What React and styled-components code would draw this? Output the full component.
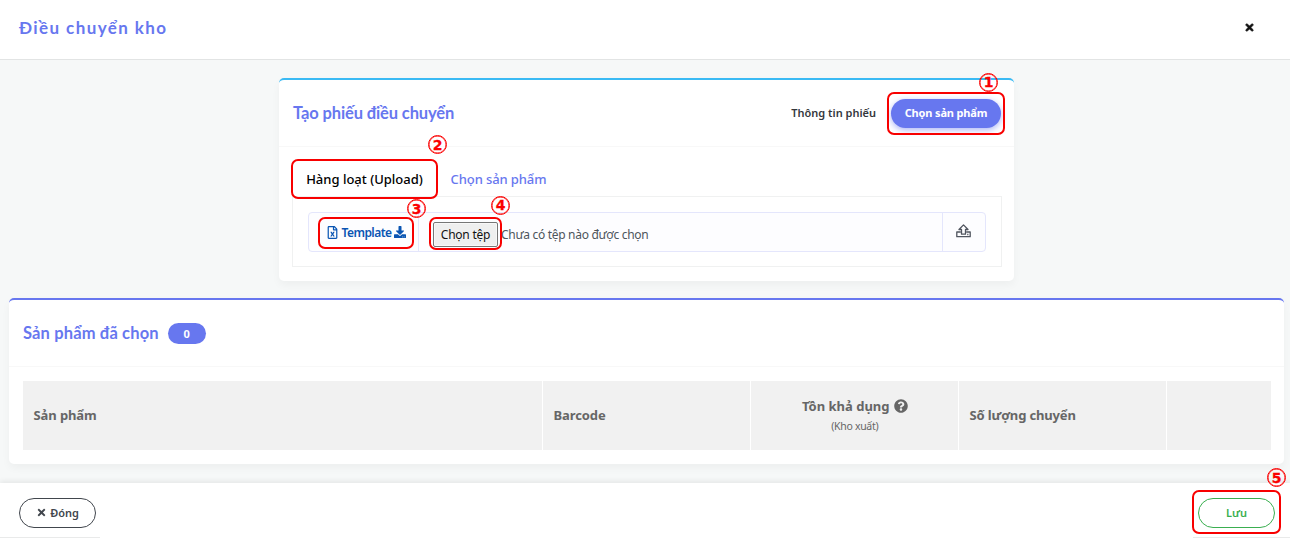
import React from "react";
import styled, { createGlobalStyle, css } from "styled-components";
import { FaTimes, FaRegFileExcel, FaDownload, FaQuestionCircle } from "react-icons/fa";

const GlobalStyle = createGlobalStyle`
  *, *::before, *::after { box-sizing: border-box; }
  body {
    margin: 0;
    overflow: hidden;
    font-family: "Noto Sans", "Open Sans", sans-serif;
    font-size: 13px;
    color: #34395e;
  }
  button { font-family: inherit; cursor: pointer; }
`;

const Page = styled.div`
  width: 1290px;
  height: 540px;
  display: flex;
  flex-direction: column;
  background: #f6f8f8;
`;

const Header = styled.header`
  height: 60px;
  flex: none;
  display: flex;
  justify-content: space-between;
  align-items: flex-start;
  padding: 15px 35px 0 19px;
  background: #fff;
  border-bottom: 1px solid #e2e4e4;
`;

const PageTitle = styled.h1`
  margin: 0;
  font: 700 17px/26px Lato, sans-serif;
  letter-spacing: 1.4px;
  color: #6777ef;
`;

const CloseButton = styled.button`
  display: flex;
  margin-top: 7px;
  padding: 0;
  border: 0;
  background: none;
  color: #111;
  font-size: 11px;
  stroke: #111;

  path { stroke-width: 30px; }
`;

const Body = styled.main`
  flex: 1;
  min-height: 0;
  padding: 18px 6px 0 9px;
  display: flex;
  flex-direction: column;
  gap: 17px;
`;

const Card = styled.section`
  flex: none;
  width: ${(p) => p.$width || "100%"};
  height: ${(p) => p.$height};
  margin-left: ${(p) => p.$left || 0};
  background: #fff;
  border-top: 2px solid ${(p) => p.$accent};
  border-radius: 5px;
  box-shadow: 0 4px 8px rgba(0, 0, 0, 0.04);
`;

const CardHeader = styled.div`
  height: 67px;
  display: flex;
  align-items: center;
  padding: 0 13px 0 14px;
  border-bottom: 1px solid #f8f8f8;
`;

const CardTitle = styled.h2`
  margin: 0;
  font: 700 16.5px/24px Lato, sans-serif;
  letter-spacing: ${(p) => p.$spacing || 0};
  color: #6777ef;
`;

const HeaderActions = styled.div`
  margin-left: auto;
  display: flex;
  align-items: center;
`;

const PlainAction = styled.button`
  padding: 0 0 2px;
  margin-right: 15px;
  border: 0;
  background: none;
  color: #34373c;
  font-size: 11px;
  font-weight: 600;
  letter-spacing: 0;
`;

const Marked = styled.div`
  position: relative;
  display: flex;
`;

const MarkFrame = styled.span`
  position: absolute;
  inset: ${(p) => p.$inset};
  border: 2px solid #f80000;
  border-radius: 7px;
  pointer-events: none;
`;

const MarkNumber = styled.span`
  position: absolute;
  right: ${(p) => p.$right};
  top: ${(p) => p.$top};
  width: 19px;
  height: 19px;
  display: flex;
  align-items: center;
  justify-content: center;
  border: 1px solid #fb0000;
  box-shadow: inset 0 0 0 0.5px #fb0000;
  border-radius: 50%;
  font: 700 14px/1 "DejaVu Sans", sans-serif;
  color: #fb0000;
  -webkit-text-stroke: 0.3px #fb0000;
  z-index: 2;
`;

const Pill = styled.button`
  display: flex;
  align-items: center;
  justify-content: center;
  gap: 3px;
  width: ${(p) => p.$width};
  height: ${(p) => p.$height || "30px"};
  padding: 0 0 1px;
  border-radius: 16px;
  font-size: 11px;
  font-weight: 600;
  letter-spacing: ${(p) => p.$spacing || 0};
  ${(p) =>
    p.$tone
      ? css`
          border: 1px solid ${p.$tone};
          background: #fff;
          color: ${p.$tone};
        `
      : css`
          border: 0;
          background: #6777ef;
          color: #fff;
          font-weight: 700;
          box-shadow: 0 2px 6px #acb5f6;
        `}
`;

const UploadArea = styled.div`
  padding: 12px 12px 0 13px;
`;

const Tabs = styled.div`
  height: 37px;
  display: flex;
`;

const Tab = styled.button`
  height: 40px;
  padding: 0;
  width: ${(p) => p.$width};
  border: 0;
  background: none;
  font-size: 13px;
  font-weight: 500;
  letter-spacing: ${(p) => p.$spacing || 0};
  color: ${(p) => (p.$active ? "#000" : "#6777ef")};
`;

const TabPanel = styled.div`
  height: 71px;
  padding: 15px 15px 0;
  border: 1px solid #f0f1f1;
`;

const InputGroup = styled.div`
  height: 40px;
  display: flex;
  background: #fdfdff;
  border: 1px solid #e4e6fc;
  border-radius: 4px;
`;

const TemplateCell = styled.div`
  width: 110px;
  padding: 4px 4px 0 9px;
  border-right: 1px solid #e4e6fc;
`;

const TemplateLink = styled.button`
  width: 96px;
  height: 32px;
  display: flex;
  align-items: center;
  justify-content: center;
  gap: 3px;
  padding: 0 0 2px;
  border: 0;
  background: none;
  color: #0a55b3;
  font-size: 12px;
  font-weight: 600;
  letter-spacing: -0.55px;
`;

const FileCell = styled.div`
  flex: 1;
  display: flex;
  align-items: center;
  gap: 3px;
  padding: 4px 0 0 14px;
  color: #4d555c;
  font-size: 12px;
  letter-spacing: -0.3px;
`;

const FileButton = styled.button`
  width: 65px;
  height: 25px;
  padding: 0;
  border: 1px solid #767676;
  border-radius: 2px;
  background: #efefef;
  box-shadow: inset 0 0 0 1px #f8f8f8;
  color: #111;
  font-size: 12px;
  letter-spacing: -0.25px;
`;

const UploadButton = styled.button`
  width: 43px;
  padding: 0 1px 3px 0;
  display: flex;
  align-items: center;
  justify-content: center;
  border: 0;
  border-left: 1px solid #e4e6fc;
  background: none;
`;

const CountBadge = styled.span`
  width: 38px;
  height: 21px;
  margin-left: 9px;
  display: flex;
  align-items: center;
  justify-content: center;
  border-radius: 11px;
  background: #6777ef;
  color: #fff;
  font-size: 11px;
  font-weight: 700;
`;

const Table = styled.div`
  height: 69px;
  margin: 14px 13px 0 14px;
  display: grid;
  grid-template-columns: 519px 207px 207px 207px 104px;
  column-gap: 1px;
`;

const HeadCell = styled.div`
  display: flex;
  flex-direction: column;
  justify-content: center;
  align-items: ${(p) => (p.$center ? "center" : "flex-start")};
  padding: 0 10px ${(p) => (p.$center ? 0 : "1px")} 10.5px;
  background: #f1f1f1;
  color: #666;
  font-size: 13px;
  line-height: 20px;
  font-weight: 700;
`;

const HeadLabel = styled.span`
  display: flex;
  align-items: center;
  gap: 4px;
  letter-spacing: ${(p) => p.$spacing || "-0.1px"};
`;

const HeadNote = styled.small`
  font-size: 10.5px;
  font-weight: 400;
  letter-spacing: -0.3px;
`;

const Footer = styled.footer`
  height: 57px;
  flex: none;
  display: flex;
  align-items: flex-start;
  justify-content: space-between;
  background: #fff;
  box-shadow: 0 -2px 5px rgba(0, 0, 0, 0.07);
`;

const FooterSlot = styled.div`
  width: ${(p) => p.$width};
  height: 55px;
  padding: 15px ${(p) => p.$right || 0} 0 ${(p) => p.$left};
  border-bottom: 1px solid #e9eaea;
`;

function Mark({ number, inset, right, top }) {
  return (
    <>
      <MarkFrame $inset={inset} />
      <MarkNumber $right={right} $top={top}>{number}</MarkNumber>
    </>
  );
}

function UploadIcon() {
  return (
    <svg width="15" height="14" viewBox="0 0 15 14" fill="none" stroke="#50555f" strokeWidth="1.3" strokeLinejoin="round">
      <path d="M4.8 8H.8v4.7h13.4V8h-4" />
      <path d="M7.5.9 3 5.5h2.5v4.7h4V5.5H12L7.5.9Z" />
      <path d="M11.2 10.5h1.2" />
    </svg>
  );
}

export default function App() {
  return (
    <Page>
      <GlobalStyle />
      <Header>
        <PageTitle>Điều chuyển kho</PageTitle>
        <CloseButton aria-label="Đóng"><FaTimes /></CloseButton>
      </Header>
      <Body>
        <Card $width="735px" $height="203px" $left="270px" $accent="#3abaf4">
          <CardHeader>
            <CardTitle $spacing="-0.12px">Tạo phiếu điều chuyển</CardTitle>
            <HeaderActions>
              <PlainAction>Thông tin phiếu</PlainAction>
              <Marked>
                <Pill $width="110px" $height="29px" $spacing="-0.15px">Chọn sản phẩm</Pill>
                <Mark number="1" inset="-7px -4px -7px -4px" right="3px" top="-26px" />
              </Marked>
            </HeaderActions>
          </CardHeader>
          <UploadArea>
            <Tabs>
              <Marked>
                <Tab $width="145px" $active>Hàng loạt (Upload)</Tab>
                <Mark number="2" inset="0 -1px -3px -1px" right="-10px" top="-24px" />
              </Marked>
              <Tab $width="123px" $spacing="-0.1px">Chọn sản phẩm</Tab>
            </Tabs>
            <TabPanel>
              <InputGroup>
                <TemplateCell>
                  <Marked>
                    <TemplateLink>
                      <FaRegFileExcel size={13} />Template<FaDownload size={12} />
                    </TemplateLink>
                    <Mark number="3" inset="0" right="-12px" top="-18px" />
                  </Marked>
                </TemplateCell>
                <FileCell>
                  <Marked>
                    <FileButton>Chọn tệp</FileButton>
                    <Mark number="4" inset="-5px -4px -3px -4px" right="-12px" top="-26px" />
                  </Marked>
                  <span>Chưa có tệp nào được chọn</span>
                </FileCell>
                <UploadButton aria-label="Upload"><UploadIcon /></UploadButton>
              </InputGroup>
            </TabPanel>
          </UploadArea>
        </Card>
        <Card $height="166px" $accent="#6777ef">
          <CardHeader>
            <CardTitle $spacing="0.15px">Sản phẩm đã chọn</CardTitle>
            <CountBadge>0</CountBadge>
          </CardHeader>
          <Table>
            <HeadCell><HeadLabel>Sản phẩm</HeadLabel></HeadCell>
            <HeadCell><HeadLabel>Barcode</HeadLabel></HeadCell>
            <HeadCell $center>
              <HeadLabel $spacing="0">Tồn khả dụng <FaQuestionCircle size={14} /></HeadLabel>
              <HeadNote>(Kho xuất)</HeadNote>
            </HeadCell>
            <HeadCell><HeadLabel $spacing="-0.15px">Số lượng chuyển</HeadLabel></HeadCell>
            <HeadCell />
          </Table>
        </Card>
      </Body>
      <Footer>
        <FooterSlot $width="100px" $left="19px">
          <Pill $width="77px" $tone="#41464d"><FaTimes />Đóng</Pill>
        </FooterSlot>
        <FooterSlot $width="97px" $left="5px" $right="15px">
          <Marked>
            <Pill $width="77px" $tone="#3aaf50">Lưu</Pill>
            <Mark number="5" inset="-8px -6px -6px -6px" right="-11px" top="-30px" />
          </Marked>
        </FooterSlot>
      </Footer>
    </Page>
  );
}
